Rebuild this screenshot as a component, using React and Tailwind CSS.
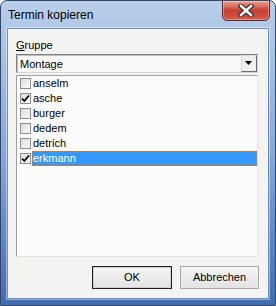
const items = [
  { name: 'anselm', checked: false },
  { name: 'asche', checked: true },
  { name: 'burger', checked: false },
  { name: 'dedem', checked: false },
  { name: 'detrich', checked: false },
  { name: 'erkmann', checked: true, selected: true },
];

const Check = ({ checked }) => (
  <span className="w-[11px] h-[11px] shrink-0 border border-[#8f8f8f] bg-gradient-to-br from-[#dcdcdc] to-[#fbfbfb] flex items-center justify-center">
    {checked && (
      <svg width="9" height="9" viewBox="0 0 9 9">
        <path d="M1 4.5 L3.3 7 L8 1.5" stroke="#000" strokeWidth="1.8" fill="none" />
      </svg>
    )}
  </span>
);

const Row = ({ name, checked, selected }) => (
  <div className="h-[15px] flex items-center pl-[3px]">
    <Check checked={checked} />
    <span
      className={`ml-[1px] flex-1 h-[15px] flex items-center pl-[1px] ${
        selected ? 'bg-[#3399ff] text-white outline outline-1 outline-dotted outline-[#c87a3a] -outline-offset-1' : 'text-black'
      }`}
    >
      {name}
    </span>
  </div>
);

export default function App() {
  return (
    <div
      className="w-[276px] h-[306px] relative flex flex-col rounded-t-[7px] border border-[#34476a] bg-gradient-to-b from-[#b9cfea] via-[#86a9d9] to-[#3f6cb2] overflow-hidden"
      style={{ fontFamily: '"Liberation Sans", Arial, sans-serif' }}
    >
      {/* Title bar */}
      <div className="h-[27px] shrink-0 flex items-center pl-[7px] text-[12px] text-black">
        Termin kopieren
      </div>
      <div className="absolute top-[-1px] left-[221px] w-[48px] h-[21px] rounded-b-[5px] border border-[#5b2a26] bg-gradient-to-b from-[#eaa392] via-[#c63e31] to-[#d65a45] flex items-center justify-center shadow-[inset_0_0_0_1px_rgba(255,255,255,0.35)]">
        <svg width="16" height="13" viewBox="0 0 16 13">
          <path d="M3 2 L13 11 M13 2 L3 11" stroke="#3b2a2a" strokeWidth="5" strokeLinecap="square" />
          <path d="M3 2 L13 11 M13 2 L3 11" stroke="#fff" strokeWidth="2.6" strokeLinecap="square" />
        </svg>
      </div>

      {/* Client area */}
      <div className="mx-[6px] mb-[6px] flex-1 border border-[#6e8fbd] bg-[#f3f3f1] flex flex-col pl-[8px] text-[11px] text-black shadow-[0_0_0_1px_rgba(255,255,255,0.45)]">
        <div className="mt-[10px] h-[13px] leading-[13px]">
          <span className="underline">G</span>ruppe
        </div>

        {/* Combobox */}
        <div className="mt-[2px] w-[242px] h-[19px] border border-[#7f7f7f] border-b-[#d4d4d4] border-r-[#d4d4d4] bg-[#fafafa] flex items-stretch">
          <div className="flex-1 flex items-center pl-[2px] border-t border-l border-[#c0c0c0]">Montage</div>
          <div className="w-[16px] border border-[#d8d8d8] border-r-[#6c6c6c] border-b-[#6c6c6c] bg-[#f0f0f0] flex items-center justify-center">
            <svg width="8" height="5" viewBox="0 0 8 5">
              <path d="M0 0 H7 L3.5 4 Z" fill="#000" />
            </svg>
          </div>
        </div>

        {/* Checked list */}
        <div className="mt-[2px] w-[242px] h-[182px] border border-[#a0a0a0] border-b-[#e3e3e3] border-r-[#e3e3e3] bg-[#fcfcfc] flex flex-col">
          {items.map((it) => (
            <Row key={it.name} {...it} />
          ))}
        </div>

        {/* Buttons */}
        <div className="mt-[9px] flex gap-[8px] pl-[76px]">
          <button className="w-[80px] h-[23px] border border-[#1e1e1e] bg-gradient-to-b from-[#f5f5f5] to-[#e3e3e3] shadow-[inset_0_0_0_1px_#cfcfcf]">
            OK
          </button>
          <button className="w-[79px] h-[23px] border border-[#a9a9a9] bg-gradient-to-b from-[#f5f5f5] to-[#e3e3e3]">
            Abbrechen
          </button>
        </div>
      </div>
    </div>
  );
}
